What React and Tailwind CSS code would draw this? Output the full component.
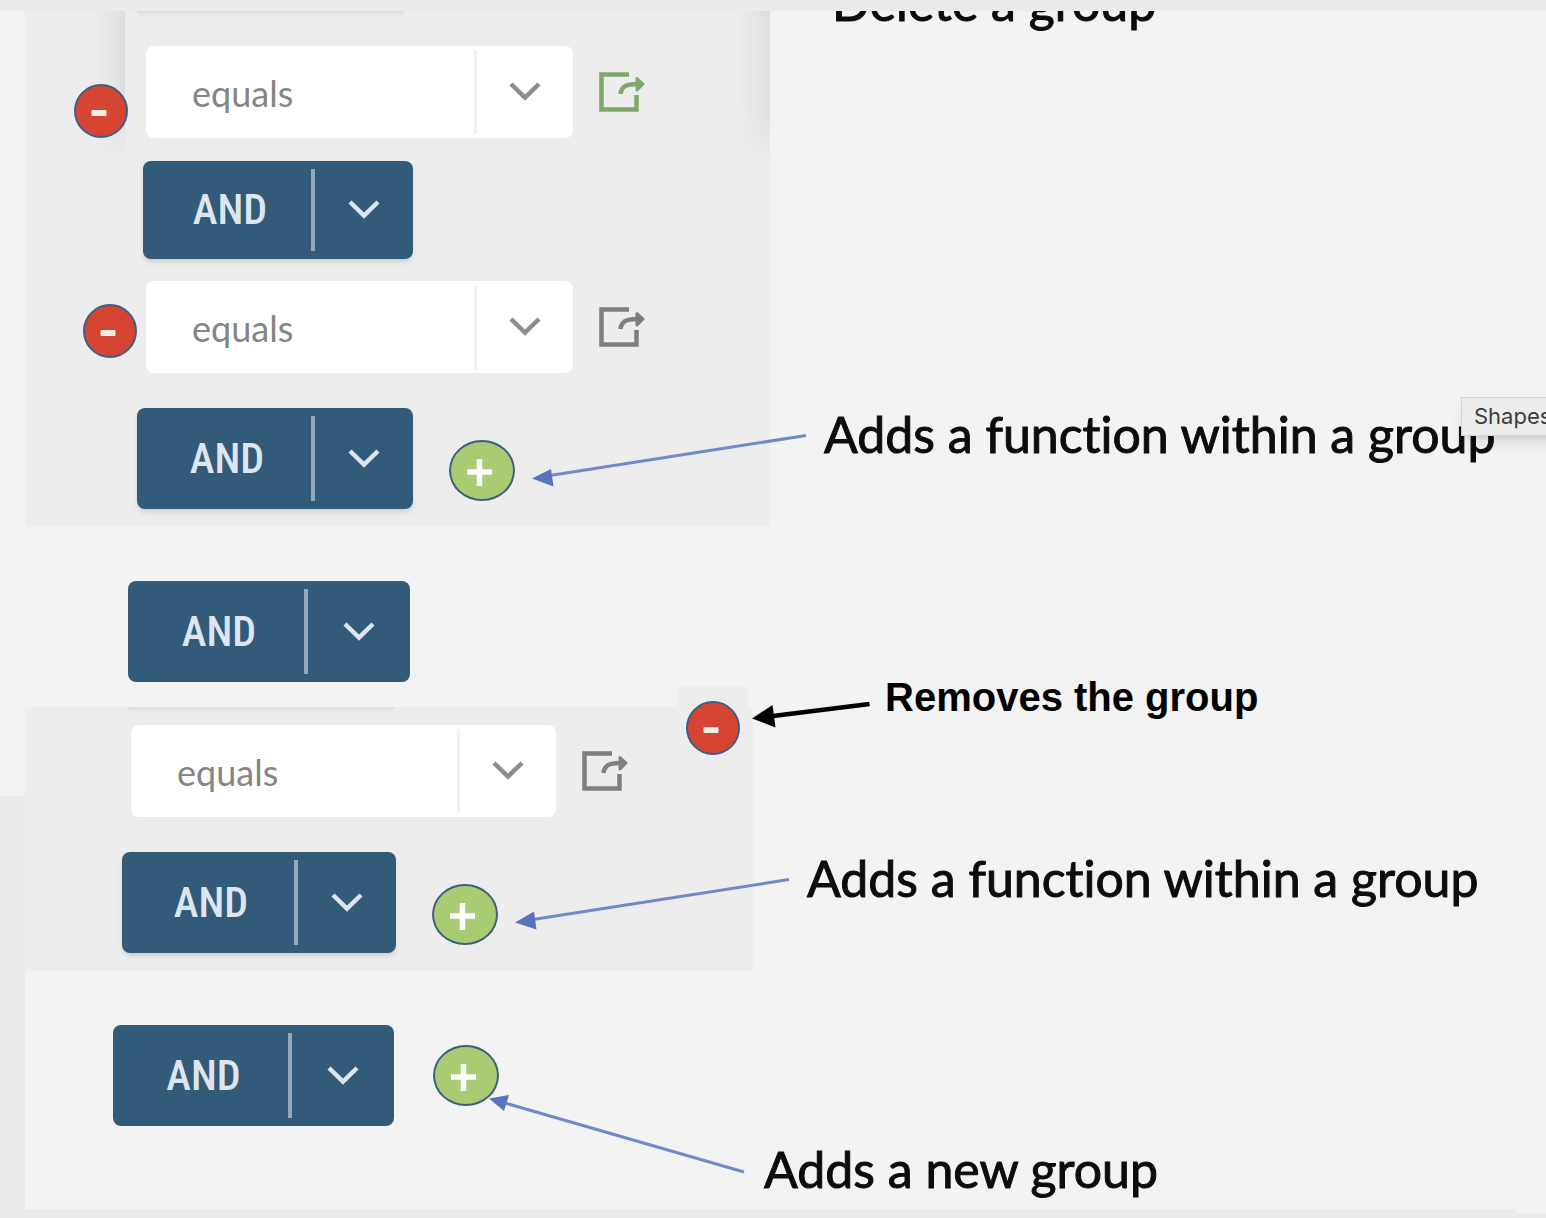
import React from 'react';

function Chevron() {
  return (
    <svg viewBox="0 0 32 20" fill="none" stroke="currentColor" strokeWidth="4.5" aria-hidden="true" className="w-8 h-5">
      <path d="M2 2 16 15.5 30 2" />
    </svg>
  );
}

function ShareIcon() {
  return (
    <svg viewBox="0 0 50 44" fill="none" stroke="currentColor" strokeWidth="4.5" aria-hidden="true" className="w-[50px] h-11">
      <path d="M32 4.5H4.5V39.5H39.5V25" />
      <path d="M23.500 24C24.500 16.500 29 14 40 14" />
      <path d="M40 8.500 46 14 40 20Z" fill="currentColor" strokeWidth="3" strokeLinejoin="round" />
    </svg>
  );
}

function Operator({ className, caret = 'w-[98px]' }) {
  return (
    <div className={`flex rounded-lg bg-[#325a79] text-[#dfe5ee] ${className}`}>
      <button className="flex-1 pl-1.5 text-[42px] leading-[48px] font-medium font-['Roboto_Condensed','Roboto',sans-serif]">
        AND
      </button>
      <span className="w-1 my-2 bg-[#93a9ba]" />
      <button aria-label="Choose operator" className={`flex items-center justify-center ${caret}`}>
        <Chevron />
      </button>
    </div>
  );
}

function Condition({ id, className }) {
  return (
    <div className={`flex items-center h-[92px] rounded-lg bg-white ${className}`}>
      <label htmlFor={id} className="sr-only">Comparison</label>
      <select
        id={id}
        className="flex-1 h-full pl-[46px] pt-0.5 appearance-none bg-transparent text-[36px] leading-[56px] text-[#858585] font-['Lato',sans-serif]"
      >
        <option>equals</option>
      </select>
      <span className="w-[3px] h-[84px] bg-[#f1f1f1]" />
      <span className="w-24 flex justify-center text-[#8d8d8d]">
        <Chevron />
      </span>
    </div>
  );
}

function ShareButton({ className }) {
  return (
    <button aria-label="Open" className={`ml-6 self-center ${className}`}>
      <ShareIcon />
    </button>
  );
}

function RemoveButton({ label, className }) {
  return (
    <button aria-label={label} className={`shrink-0 size-[54px] rounded-full border-2 border-[#3d5f87] bg-[#d64533] ${className}`}>
      <svg viewBox="0 0 50 50" aria-hidden="true">
        <rect x="15.500" y="24" width="15" height="6" rx="1" fill="#f3efe6" />
      </svg>
    </button>
  );
}

function AddButton({ label, className }) {
  return (
    <button
      aria-label={label}
      className={`shrink-0 w-[66px] h-[61px] rounded-[50%] border-2 border-[#3d6080] bg-[#a9cb72] flex items-center justify-center ${className}`}
    >
      <svg viewBox="0 0 62 57" stroke="#ffffff" strokeWidth="5.5" aria-hidden="true">
        <path d="M16 30H41M28.5 17V44" />
      </svg>
    </button>
  );
}

function Note({ children, className }) {
  return (
    <p className={`text-[50px] leading-[56px] whitespace-nowrap text-[#0c0c0c] [-webkit-text-stroke:1px_#0c0c0c] [font-variant-ligatures:none] font-['Lato',sans-serif] ${className}`}>
      {children}
    </p>
  );
}

function Arrows() {
  return (
    <svg aria-hidden="true" className="absolute inset-0 w-full h-full pointer-events-none">
      <g stroke="#6f89c9" strokeWidth="3" fill="#5873bf">
        <path d="M550 475.5 806 435.5" />
        <path d="M532 478.5 551 469 553.5 486.5Z" stroke="none" />
        <path d="M533 919.5 789 879.5" />
        <path d="M515 922.5 534 911.5 536.5 929.5Z" stroke="none" />
        <path d="M505 1103 744 1172" />
        <path d="M489 1098.5 509 1095 504 1111Z" stroke="none" />
      </g>
      <path d="M773 716 869.5 704" stroke="#000000" strokeWidth="4.5" />
      <path d="M752 718.5 772.5 705 775.5 727.5Z" fill="#000000" />
    </svg>
  );
}

function App() {
  return (
    <div className="relative min-h-screen overflow-hidden bg-[#ebebeb] pt-[11px]">
      <main className="flex overflow-hidden">
        {/* Canvas edge */}
        <div className="w-[25px] shrink-0">
          <div className="h-[785px] bg-[#f3f3f3]" />
        </div>

        <div className="flex-1 min-w-0 bg-[#f3f3f3] pb-3">
          {/* First group */}
          <section className="flex items-start">
            <div className="relative w-[745px] shrink-0 bg-[#ededed] pt-[35px] pb-[18px]">
              <span className="absolute top-0 left-[70px] w-[30px] h-[150px] bg-linear-to-r from-transparent to-[#dedede] mask-b-from-60%" />
              <span className="absolute top-0 right-0 w-[30px] h-[150px] bg-linear-to-r from-transparent to-[#dedede] mask-b-from-60%" />
              <span className="absolute top-0 left-[112px] w-[268px] h-1.5 rounded-b-full bg-linear-to-b from-[#dedede] to-transparent" />

              <div className="relative flex items-end pl-[49px]">
                <RemoveButton label="Remove function" className="mr-[18px]" />
                <Condition id="condition-1" className="w-[427px]" />
                <ShareButton className="text-[#7fa86a]" />
              </div>
              <Operator className="ml-[118px] mt-[23px] w-[270px] h-[98px] shadow-md" />
              <div className="flex items-center pl-[58px] mt-[22px]">
                <RemoveButton label="Remove function" className="mt-2 mr-[9px]" />
                <Condition id="condition-2" className="w-[427px]" />
                <ShareButton className="text-[#7f7f7f]" />
              </div>
              <div className="flex items-end pl-[112px] mt-[35px]">
                <Operator className="w-[276px] h-[101px] shadow-md" />
                <AddButton label="Add function" className="ml-9 mb-2" />
              </div>
            </div>

            <div className="ml-[54px]">
              <Note className="pl-2 -mt-[37px]">Delete a group</Note>
              <div className="relative mt-[376px]">
                <Note>Adds a function within a group</Note>
                <div
                  role="tooltip"
                  className="absolute left-[637px] -top-[9px] h-[39px] px-3 bg-[#ececec] border border-[#d4d4d4] shadow-lg text-[22px] leading-9 text-[#3c3c3c] font-['Inter',sans-serif]"
                >
                  Shapes
                </div>
              </div>
            </div>
          </section>

          <Operator className="ml-[103px] mt-[54px] w-[282px] h-[101px]" caret="w-[102px]" />

          {/* Second group */}
          <section className="flex items-start mt-[25px]">
            <div className="relative w-[728px] shrink-0 bg-[#ededed] pt-[18px] pb-[18px]">
              <span className="absolute top-0 left-[103px] w-[267px] h-1.5 rounded-b-full bg-linear-to-b from-[#dedede] to-transparent" />
              <div className="absolute right-[5px] -top-5 w-[70px] h-20 bg-[#ededed] flex justify-center pt-3.5">
                <RemoveButton label="Remove group" />
              </div>

              <div className="flex items-center pl-[106px]">
                <Condition id="condition-3" className="w-[425px]" />
                <ShareButton className="text-[#7f7f7f]" />
              </div>
              <div className="flex items-end pl-[97px] mt-[35px]">
                <Operator className="w-[274px] h-[101px] shadow-md" />
                <AddButton label="Add function" className="ml-9 mb-2" />
              </div>
            </div>

            <div className="ml-[54px]">
              <p className="pl-[78px] -mt-[38px] text-[40px] leading-[56px] whitespace-nowrap font-bold text-black font-['Liberation_Sans',sans-serif]">
                Removes the group
              </p>
              <Note className="mt-[125px]">Adds a function within a group</Note>
            </div>
          </section>

          {/* New group */}
          <div className="flex items-center pl-[88px] mt-[54px]">
            <Operator className="w-[281px] h-[101px]" caret="w-[102px]" />
            <AddButton label="Add group" className="ml-[39px]" />
          </div>
          <Note className="pl-[739px] mt-[15px]">Adds a new group</Note>
        </div>
      </main>

      <div className="flex justify-end">
        <span className="w-[30px] h-1 bg-[#f3f3f3]" />
      </div>

      <Arrows />
    </div>
  );
}

export default App;
